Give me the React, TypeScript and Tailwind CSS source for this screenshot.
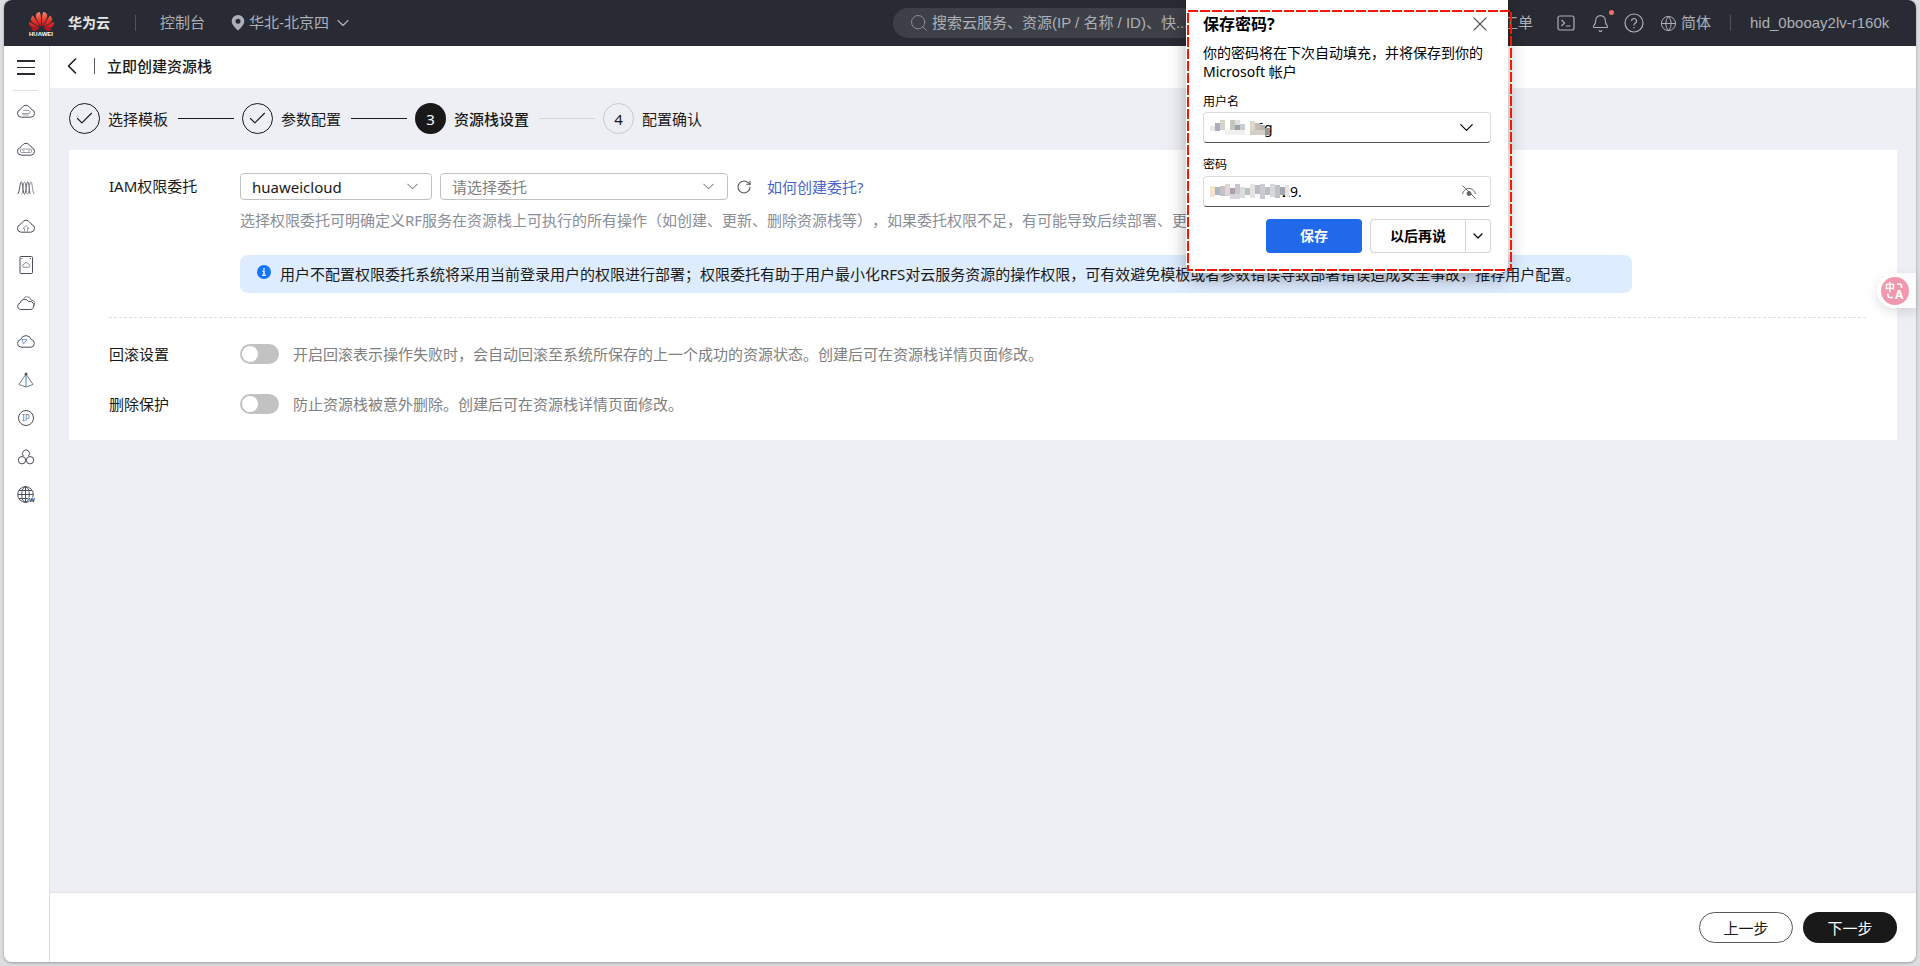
import { ReactNode, useState } from "react";
import { SiHuawei } from "react-icons/si";
import {
  Bell,
  Check,
  ChevronDown,
  ChevronLeft,
  Globe,
  RotateCw,
  Search,
  X,
} from "lucide-react";

const CLOUD =
  "M5.2 16.2a3.9 3.9 0 0 1-.7-7.7 3 3 0 0 1 1.9-2.1A4.2 4.2 0 0 1 10 4.2a4.2 4.2 0 0 1 3.6 2.2 3 3 0 0 1 1.9 2.1 3.9 3.9 0 0 1-.7 7.7z";

const sideIcons: { name: string; icon: ReactNode }[] = [
  {
    name: "弹性云服务器",
    icon: (
      <>
        <path d={CLOUD} />
        <path d="M7 9.500h6.500M6 12.500h7.500l1-2.500M6.500 14h6" stroke="#9a9ca6" />
      </>
    ),
  },
  {
    name: "裸金属服务器",
    icon: (
      <>
        <path d={CLOUD} />
        <rect x="4.500" y="10" width="11" height="3.500" rx="1" stroke="#9a9ca6" />
        <path d="M6.500 11.800h2M12 11.800h2" stroke="#9a9ca6" />
      </>
    ),
  },
  {
    name: "弹性伸缩",
    icon: (
      <>
        <path d="M1.500 16c2.500-1 2-12 3.800-12s1.400 12 3.200 12 1.500-12 3.300-12 1.200 12 2.700 12" />
        <path
          d="M5.500 16c1.700 0 1.300-12 3-12s1.400 12 3.200 12 1.400-12 3.200-12 1.100 11 3.600 12"
          stroke="#8a8c96"
        />
      </>
    ),
  },
  {
    name: "云备份",
    icon: (
      <>
        <path d={CLOUD} />
        <path d="M8.500 15.500V12.500H7L10 9.500l3 3h-1.500v3" stroke="#9a9ca6" />
      </>
    ),
  },
  {
    name: "云硬盘",
    icon: (
      <>
        <rect x="4" y="1.500" width="12.500" height="17" rx="1" />
        <path d="M5.500 3.500h1M14 3.500h1" />
        <path
          d="M8 12.200a1.500 1.500 0 0 1 0-3 2.300 2.300 0 0 1 4.400 0 1.500 1.500 0 0 1 0 3z"
          stroke="#8a8c96"
        />
      </>
    ),
  },
  {
    name: "虚拟私有云",
    icon: (
      <>
        <path d="M4.500 16.500a3.300 3.300 0 0 1-.3-6.500A4.600 4.600 0 0 1 12.600 8.500a3.800 3.800 0 0 1 2.300 8z" />
        <path
          d="M7.500 5.500A4.200 4.200 0 0 1 15 7a3.500 3.500 0 0 1 2 6.500"
          stroke="#7b7d88"
        />
      </>
    ),
  },
  {
    name: "对象存储",
    icon: (
      <>
        <path d="M5 16.200a3.900 3.900 0 0 1-.3-7.700 5.500 5.500 0 0 1 10.500 0 3.900 3.900 0 0 1-.3 7.700z" />
        <path d="M6 8.500l5 0-3.500 4.500z" stroke="#7a9cd0" />
      </>
    ),
  },
  {
    name: "弹性负载均衡",
    icon: (
      <>
        <path d="M10 4 3 14.500l7 2.500 7-2.500z" stroke="#7b7d88" />
        <path d="M10 4v13" stroke="#3f87c4" />
        <circle cx="10" cy="4" r="1" fill="#3b3e4a" />
      </>
    ),
  },
  {
    name: "弹性公网IP",
    icon: (
      <>
        <circle cx="10" cy="10" r="7.500" />
        <text
          x="10"
          y="13"
          textAnchor="middle"
          fontSize="8"
          stroke="none"
          fill="#6b6e7a"
        >
          IP
        </text>
      </>
    ),
  },
  {
    name: "资源编排",
    icon: (
      <>
        <path d="M7.400 9a3.600 3.600 0 1 1 5.200 0" />
        <circle cx="6" cy="13.200" r="3.700" />
        <circle cx="14" cy="13.200" r="3.700" />
      </>
    ),
  },
  {
    name: "域名注册",
    icon: (
      <>
        <circle cx="9.500" cy="9.500" r="7.800" />
        <ellipse cx="9.500" cy="9.500" rx="3.800" ry="7.800" />
        <path d="M9.500 1.700v15.600M1.700 9.500h15.600M3 5.500h13M3 13.500h9" />
        <text
          x="16"
          y="17"
          textAnchor="middle"
          fontSize="6"
          fontWeight="bold"
          stroke="#fff"
          strokeWidth="1"
          paintOrder="stroke"
          fill="#2b2e3a"
        >
          W
        </text>
      </>
    ),
  },
];

const steps = [
  { title: "选择模板", state: "done" },
  { title: "参数配置", state: "done" },
  { title: "资源栈设置", state: "current" },
  { title: "配置确认", state: "wait" },
];

function TopBar() {
  return (
    <header className="flex h-[46px] shrink-0 items-center rounded-t-lg bg-[#282b33] text-[15px] leading-6 text-[#adb0b8] font-['Liberation_Sans','Noto_Sans_CJK_SC',sans-serif]">
      <div className="flex flex-1 items-center whitespace-nowrap">
        <a href="#" className="ml-6 flex w-[26px] flex-col items-center">
          <svg width="0" height="0" className="absolute">
            <linearGradient id="petal" x1="0" y1="0" x2="0" y2="1">
              <stop offset="0" stopColor="#f5896a" />
              <stop offset="0.45" stopColor="#e3332b" />
              <stop offset="1" stopColor="#c8101b" />
            </linearGradient>
          </svg>
          <SiHuawei size={25} fill="url(#petal)" />
          <span className="-mt-1 text-[6px] leading-[8px] font-bold text-white">
            HUAWEI
          </span>
        </a>
        <span className="ml-[14px] text-sm font-bold text-[#e6e7ea]">
          华为云
        </span>
        <span className="ml-[25px] h-4 w-px bg-[#50535b]" />
        <a href="#" className="ml-6 w-[47px]">
          控制台
        </a>
        <button type="button" className="ml-6 flex items-center">
          <svg width="14" height="16" viewBox="0 0 14 16" fill="#adb0b8">
            <path
              fillRule="evenodd"
              d="M7 0a6.300 6.300 0 0 1 6.300 6.300C13.300 10 9 13.500 7 15.800 5 13.500.7 10 .7 6.300A6.300 6.300 0 0 1 7 0zm0 3.800a2.500 2.500 0 1 0 0 5 2.500 2.500 0 0 0 0-5z"
            />
          </svg>
          <span className="ml-1">华北-北京四</span>
          <ChevronDown className="ml-1" size={20} strokeWidth={1.4} />
        </button>
      </div>
      <label className="flex h-[30px] w-[320px] items-center rounded-full bg-[#3d4047] pr-5 pl-4">
        <Search size={20} strokeWidth={1.2} className="text-[#8a8d95]" />
        <input
          aria-label="搜索"
          placeholder="搜索云服务、资源(IP / 名称 / ID)、快..."
          className="ml-[3px] flex-1 bg-transparent outline-none placeholder:text-[#adb0b8]"
        />
      </label>
      <nav className="flex w-[703px] items-center justify-end pr-[23px] whitespace-nowrap">
        <a href="#">工单</a>
        <button type="button" aria-label="CloudShell" className="ml-6">
          <svg
            width="18"
            height="16"
            viewBox="0 0 18 16"
            fill="none"
            stroke="currentColor"
            strokeWidth="1.200"
          >
            <rect x="1" y="1" width="16" height="14" rx="2" />
            <path d="M4.500 5l3 3-3 3M9 11h4.500" />
          </svg>
        </button>
        <button type="button" aria-label="消息" className="relative ml-4">
          <Bell size={19} strokeWidth={1.4} />
          <span className="absolute -top-1 -right-1 size-[5px] rounded-full bg-[#f66f6a]" />
        </button>
        <button type="button" aria-label="帮助" className="ml-[14px]">
          <svg
            width="20"
            height="20"
            viewBox="0 0 20 20"
            fill="none"
            stroke="currentColor"
            strokeWidth="1.200"
          >
            <circle cx="10" cy="10" r="9" />
            <path d="M7.500 8a2.500 2.500 0 1 1 3.700 2.200c-.8.500-1.200.9-1.200 1.800v.5M10 14v1.200" />
          </svg>
        </button>
        <button type="button" className="ml-4 flex items-center gap-1">
          <Globe size={17} strokeWidth={1.4} />
          简体
        </button>
        <span className="ml-[19px] h-4 w-px bg-[#50535b]" />
        <a href="#" className="ml-[19px] w-[143px]">
          hid_0booay2lv-r160k
        </a>
      </nav>
    </header>
  );
}

function SideBar() {
  return (
    <aside className="flex w-[46px] shrink-0 flex-col items-center rounded-bl-lg border-r border-[#dfe1e6] bg-white pr-[2px]">
      <button
        type="button"
        aria-label="服务列表"
        className="mt-[14px] flex h-[15px] w-[18px] flex-col justify-between"
      >
        <span className="h-[2px] w-full bg-[#282b33]" />
        <span className="h-px w-full bg-[#282b33]" />
        <span className="h-[2px] w-full bg-[#282b33]" />
      </button>
      <span className="mt-[15px] h-px w-[25px] bg-[#dfe1e6]" />
      <ul className="mt-[10px] flex h-[404px] flex-col justify-between">
        {sideIcons.map(({ name, icon }) => (
          <li key={name}>
            <a href="#" aria-label={name}>
              <svg
                width="20"
                height="20"
                viewBox="0 0 20 20"
                fill="none"
                stroke="#4b4e5b"
                strokeWidth="1"
              >
                {icon}
              </svg>
            </a>
          </li>
        ))}
      </ul>
    </aside>
  );
}

function Steps() {
  return (
    <ol className="flex items-center gap-2">
      {steps.map(({ title, state }, i) => (
        <li key={title} className="flex items-center gap-2">
          {state === "done" && (
            <span className="flex size-[31px] items-center justify-center rounded-full border border-[#191919]">
              <Check size={21} strokeWidth={1.3} />
            </span>
          )}
          {state === "current" && (
            <span className="flex size-[31px] items-center justify-center rounded-full bg-[#191919] text-white">
              {i + 1}
            </span>
          )}
          {state === "wait" && (
            <span className="flex size-[31px] items-center justify-center rounded-full border border-[#c9cace]">
              {i + 1}
            </span>
          )}
          <span
            className={
              state === "current" ? "w-[77px] font-medium" : "w-[62px]"
            }
          >
            {title}
          </span>
          {i < steps.length - 1 && (
            <span
              className={
                state === "done"
                  ? "h-px w-[56px] bg-[#191919]"
                  : "h-px w-[56px] bg-[#d5d6da]"
              }
            />
          )}
        </li>
      ))}
    </ol>
  );
}

function SwitchRow({
  id,
  label,
  desc,
}: {
  id: string;
  label: string;
  desc: string;
}) {
  return (
    <div className="flex h-5 items-center">
      <label htmlFor={id} className="w-[131px]">
        {label}
      </label>
      <input
        id={id}
        type="checkbox"
        role="switch"
        className="h-5 w-[39px] appearance-none rounded-full bg-[#c2c2c2] before:m-[2px] before:block before:size-4 before:rounded-full before:bg-white checked:bg-[#191919] checked:before:ml-[21px]"
      />
      <span className="ml-[14px] text-[#808080]">{desc}</span>
    </div>
  );
}

function StackForm() {
  return (
    <section className="mt-4 bg-white pt-[23px] pr-[31px] pb-[26px] pl-10">
      <div className="flex">
        <label htmlFor="agency" className="w-[131px] leading-[27px]">
          IAM权限委托
        </label>
        <div className="min-w-0 flex-1">
          <div className="flex items-center">
            <div className="grid w-[192px] items-center">
              <select
                id="agency"
                className="col-start-1 row-start-1 h-[27px] appearance-none rounded border border-[#c2c2c2] pr-8 pl-[11px]"
              >
                <option>huaweicloud</option>
              </select>
              <ChevronDown
                size={19}
                strokeWidth={1.2}
                className="pointer-events-none col-start-1 row-start-1 mr-[10px] justify-self-end text-[#595959]"
              />
            </div>
            <div className="ml-2 grid w-[288px] items-center">
              <select
                aria-label="委托"
                className="col-start-1 row-start-1 h-[27px] appearance-none rounded border border-[#c2c2c2] pr-8 pl-[11px] text-[#808080]"
              >
                <option>请选择委托</option>
              </select>
              <ChevronDown
                size={19}
                strokeWidth={1.2}
                className="pointer-events-none col-start-1 row-start-1 mr-[10px] justify-self-end text-[#595959]"
              />
            </div>
            <button type="button" aria-label="刷新" className="ml-2">
              <RotateCw size={16} strokeWidth={1.6} className="text-[#595959]" />
            </button>
            <a href="#" className="ml-[15px] text-[#4c66cf]">
              如何创建委托?
            </a>
          </div>
          <p className="mt-2 text-[#8a8e99]">
            选择权限委托可明确定义RF服务在资源栈上可执行的所有操作（如创建、更新、删除资源栈等），如果委托权限不足，有可能导致后续部署、更新等操作失败。
          </p>
          <div className="mt-[23px] flex h-[38px] w-[1392px] max-w-full items-center rounded-lg bg-[#deecff] pl-[17px] whitespace-nowrap">
            <svg width="14" height="14" viewBox="0 0 14 14" className="mb-1">
              <circle cx="7" cy="7" r="7" fill="#1476ff" />
              <path
                d="M7 3v1.700M5.500 6.200H7v4M5.300 10.300h3.500"
                stroke="#fff"
                strokeWidth="1.400"
                fill="none"
              />
            </svg>
            <span className="ml-[9px]">
              用户不配置权限委托系统将采用当前登录用户的权限进行部署；权限委托有助于用户最小化RFS对云服务资源的操作权限，可有效避免模板或者参数错误导致部署错误造成安全事故，推荐用户配置。
            </span>
          </div>
        </div>
      </div>
      <hr className="mt-6 mb-[26px] border-t border-dashed border-[#dfdfdf]" />
      <div className="flex flex-col gap-[30px]">
        <SwitchRow
          id="rollback"
          label="回滚设置"
          desc="开启回滚表示操作失败时，会自动回滚至系统所保存的上一个成功的资源状态。创建后可在资源栈详情页面修改。"
        />
        <SwitchRow
          id="protect"
          label="删除保护"
          desc="防止资源栈被意外删除。创建后可在资源栈详情页面修改。"
        />
      </div>
    </section>
  );
}

// Blurred-out part of a saved credential
const nameBlocks = [
  ["#ece7e1", 0, 6, 5, 5],
  ["#a9aebc", 5, 3, 5, 8],
  ["#d5d5cb", 10, 0, 5, 10],
  ["#c4c5bd", 20, 0, 5, 10],
  ["#e2dfe2", 25, 0, 5, 5],
  ["#97a2ab", 25, 5, 5, 5],
  ["#c9ccd0", 30, 4, 5, 8],
  ["#f0f0f0", 15, 10, 20, 5],
  ["#d9d9cb", 40, 1, 5, 10],
  ["#c9b8b6", 45, 3, 5, 8],
  ["#b6b2ac", 50, 5, 5, 7],
  ["#d6cfc8", 40, 10, 15, 5],
  ["#9b978f", 55, 8, 5, 7],
] as const;

const pwdBlocks = [
  ["#f7e4cf", 0, 2, 5, 11],
  ["#a9b6c4", 5, 3, 5, 8],
  ["#c7c0c5", 10, 2, 5, 10],
  ["#e0d6d4", 15, 0, 5, 12],
  ["#ab9fae", 20, 4, 5, 6],
  ["#d9d5dc", 20, 10, 10, 5],
  ["#c3c9cf", 25, 0, 5, 10],
  ["#dcdcd8", 30, 3, 5, 11],
  ["#b9c3c6", 35, 4, 5, 7],
  ["#e4e4e4", 40, 0, 5, 14],
  ["#bcbcc6", 45, 1, 5, 9],
  ["#cccbd2", 50, 0, 5, 15],
  ["#b8bfbd", 55, 3, 5, 8],
  ["#d6d9dc", 60, 0, 5, 13],
  ["#c2c2c2", 65, 1, 5, 13],
  ["#a8a6b2", 70, 3, 5, 8],
  ["#e6e2e6", 75, 1, 4, 12],
] as const;

function Mosaic({ blocks }: { blocks: typeof nameBlocks | typeof pwdBlocks }) {
  return (
    <svg
      width="80"
      height="16"
      viewBox="0 0 80 16"
      className="pointer-events-none absolute bottom-1.5 left-1.5"
    >
      {blocks.map(([fill, x, y, w, h]) => (
        <rect
          key={`${x}-${y}`}
          x={x}
          y={y}
          width={w}
          height={h}
          fill={fill}
        />
      ))}
    </svg>
  );
}

function SavePassword() {
  const [name, setName] = useState("6g");
  const [pwd, setPwd] = useState("29.");

  return (
    <div className="absolute top-0 right-[408px] w-[322px]">
      <div className="rounded-b-lg bg-white px-[17px] pb-4 text-black shadow-[0_6px_18px_rgba(0,0,0,0.3)]">
        <div className="flex items-center justify-between pt-3">
          <h2 className="text-base leading-6 font-bold">保存密码?</h2>
          <button type="button" aria-label="关闭" className="-mr-px">
            <X size={24} strokeWidth={1.1} className="text-[#555]" />
          </button>
        </div>
        <p className="mt-[7px] text-sm leading-[19px]">
          你的密码将在下次自动填充，并将保存到你的 Microsoft 帐户
        </p>
        <label htmlFor="pw-name" className="mt-[11px] block text-xs leading-5">
          用户名
        </label>
        <div className="relative flex h-[31px] w-[288px] items-center rounded border border-b-[#555] border-[#dcdcdc] pr-3">
          <input
            id="pw-name"
            value={name}
            onChange={(e) => setName(e.target.value)}
            className="w-full bg-transparent pl-[52px] text-sm outline-none"
          />
          <Mosaic blocks={nameBlocks} />
          <button type="button" aria-label="选择帐户">
            <ChevronDown size={23} strokeWidth={1.2} />
          </button>
        </div>
        <label htmlFor="pw-value" className="mt-3 block text-xs leading-5">
          密码
        </label>
        <div className="relative mt-px flex h-[31px] w-[288px] items-center rounded border border-b-[#555] border-[#dcdcdc] pr-[13px]">
          <input
            id="pw-value"
            value={pwd}
            onChange={(e) => setPwd(e.target.value)}
            className="w-full bg-transparent pl-[78px] text-sm outline-none"
          />
          <Mosaic blocks={pwdBlocks} />
          <button type="button" aria-label="隐藏密码">
            <svg
              width="16"
              height="16"
              viewBox="0 0 16 16"
              fill="none"
              stroke="#666"
              strokeWidth="1"
            >
              <path d="M1.500 10C3 5.500 5.500 4.500 8 4.500s5.200 1.200 6.500 5.500M1.500 1.500l13 13" />
              <circle cx="8" cy="9.500" r="2" fill="#666" />
            </svg>
          </button>
        </div>
        <div className="mt-3 mb-1 flex h-[34px] w-[288px] justify-end text-sm font-bold">
          <button
            type="button"
            className="w-24 rounded bg-[#2169eb] text-white"
          >
            保存
          </button>
          <button
            type="button"
            className="ml-2 w-24 rounded-l border border-[#d5d5d5]"
          >
            以后再说
          </button>
          <button
            type="button"
            aria-label="更多选项"
            className="flex w-[25px] items-center justify-center rounded-r border border-l-0 border-[#d5d5d5]"
          >
            <ChevronDown size={16} strokeWidth={1.8} />
          </button>
        </div>
      </div>
      <svg
        width="328"
        height="264"
        className="pointer-events-none absolute top-[9px] left-0"
      >
        <rect
          x="2"
          y="2"
          width="323"
          height="259"
          fill="none"
          stroke="#fb1505"
          strokeWidth="2"
          strokeDasharray="10 2"
        />
      </svg>
    </div>
  );
}

function TranslateButton() {
  return (
    <button
      type="button"
      aria-label="翻译"
      className="absolute top-[273px] right-0 flex h-[35px] w-[39px] items-center rounded-l-full bg-white/80 pl-1 shadow-[0_4px_12px_rgba(0,0,0,0.12)]"
    >
      <svg width="28" height="28" viewBox="0 0 28 28">
        <circle cx="14" cy="14" r="14" fill="#f298ae" />
        <g fill="#fff" fontWeight="bold">
          <text x="4" y="14" fontSize="10">
            中
          </text>
          <text x="14" y="22" fontSize="12">
            A
          </text>
        </g>
        <path
          d="M16 7h2.500a2 2 0 0 1 2 2V11M7 16.500v2a2 2 0 0 0 2 2h3"
          stroke="#fff"
          strokeWidth="1.600"
          fill="none"
        />
      </svg>
    </button>
  );
}

export default function App() {
  return (
    <div className="min-h-screen bg-[#dcdde1] px-1 pb-1 text-[15px] leading-6 text-[#191919] [text-spacing-trim:space-all] font-['Noto_Sans','Noto_Sans_CJK_SC',sans-serif]">
      <div className="relative flex min-h-[calc(100vh-4px)] flex-col rounded-lg bg-[#eeeff4] shadow-[0_1px_3px_rgba(0,0,0,0.3)]">
        <TopBar />
        <div className="flex flex-1">
          <SideBar />
          <div className="flex min-w-0 flex-1 flex-col">
            <div className="flex h-[42px] items-center bg-white pb-[3px] pl-2">
              <button type="button" aria-label="返回">
                <ChevronLeft size={28} strokeWidth={1.3} />
              </button>
              <span className="ml-2 h-4 w-px bg-[#595959]" />
              <h1 className="ml-3 font-medium">立即创建资源栈</h1>
            </div>
            <main className="flex-1 px-[19px] pt-[15px]">
              <Steps />
              <StackForm />
            </main>
            <footer className="flex h-[69px] items-center justify-end gap-[10px] rounded-br-lg bg-white pr-[19px] shadow-[0_-1px_2px_rgba(0,0,0,0.06)]">
              <button
                type="button"
                className="h-[31px] w-[94px] rounded-full border border-[#595959]"
              >
                上一步
              </button>
              <button
                type="button"
                className="h-[31px] w-[94px] rounded-full bg-[#191919] text-white"
              >
                下一步
              </button>
            </footer>
          </div>
        </div>
        <SavePassword />
        <TranslateButton />
      </div>
    </div>
  );
}
